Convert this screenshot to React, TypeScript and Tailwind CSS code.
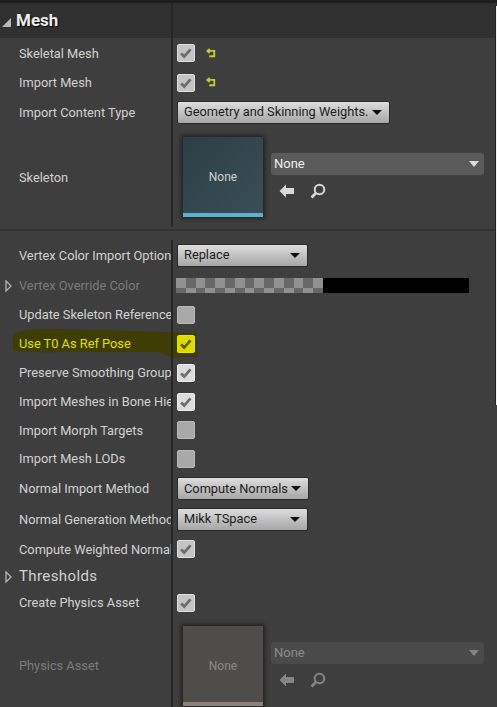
import type { ReactNode } from "react";

const FONT = "font-['Roboto','Liberation_Sans',sans-serif]";

const Check = ({ dark }: { dark?: boolean }) => (
  <svg viewBox="0 0 18 18" className="h-[18px] w-[18px]">
    <path
      d="M3.5 9.5 7 13 14 5"
      fill="none"
      stroke={dark ? "#5c5c00" : "#6b6b6b"}
      strokeWidth="3"
    />
  </svg>
);

const Checkbox = ({
  checked,
  variant = "normal",
}: {
  checked?: boolean;
  variant?: "normal" | "bright" | "yellow";
}) => {
  const look =
    variant === "yellow"
      ? "bg-[#dcdc00] border-[#e6e600]"
      : variant === "bright"
        ? "bg-[#dcdcdc] border-[#efefef]"
        : checked
          ? "bg-[#c4c4c4] border-[#e0e0e0]"
          : "bg-[#a9a9a9] border-[#b8b8b8]";
  return (
    <div
      className={`flex h-[18px] w-[18px] shrink-0 items-center justify-center rounded-[2px] border ${look}`}
    >
      {checked && <Check dark={variant === "yellow"} />}
    </div>
  );
};

const ResetArrow = () => (
  <svg viewBox="0 0 12 12" className="ml-[11px] h-[11px] w-[11px]">
    <path
      d="M4 1 1.5 3.2 4 5.4M2 3.2h7v5.8H3.5"
      fill="none"
      stroke="#c6ca2f"
      strokeWidth="2"
    />
  </svg>
);

const Dropdown = ({ label, width }: { label: string; width: string }) => (
  <div
    className={`flex h-[23px] items-center justify-between rounded-[2px] border border-[#2a2a2a] bg-gradient-to-b from-[#dedede] to-[#a6a6a6] pl-[6px] pr-[7px] text-[12.8px] text-[#1c1c1c] ${width}`}
  >
    <span className="whitespace-nowrap">{label}</span>
    <span className="h-0 w-0 shrink-0 border-x-[5px] border-t-[5px] border-x-transparent border-t-[#111]" />
  </div>
);

const BackArrow = ({ color }: { color: string }) => (
  <svg viewBox="0 0 16 14" className="h-[14px] w-4">
    <path d="M7 0.5 0.5 7 7 13.5V10h8V4H7z" fill={color} />
  </svg>
);

const Search = ({ color }: { color: string }) => (
  <svg viewBox="0 0 16 16" className="h-4 w-4">
    <circle cx="9.5" cy="6.5" r="4.8" fill="none" stroke={color} strokeWidth="2" />
    <path d="M6 10 1.5 14.5" stroke={color} strokeWidth="2.6" />
  </svg>
);

const Expander = () => (
  <svg viewBox="0 0 7 12" className="absolute left-[5px] h-3 w-[7px]">
    <path d="M1 1 6 6 1 11Z" fill="#3a3a3a" stroke="#b5b5b5" strokeWidth="1.3" />
  </svg>
);

const Row = ({
  label,
  height,
  muted,
  yellow,
  big,
  expander,
  children,
}: {
  label: string;
  height: string;
  muted?: boolean;
  yellow?: boolean;
  big?: boolean;
  expander?: boolean;
  children?: ReactNode;
}) => {
  const color = yellow
    ? "text-[#e0e000]"
    : muted
      ? "text-[#7c7c7c]"
      : "text-[#d2d2d2]";
  return (
    <div className={`relative z-10 flex ${height}`}>
      <div className="relative flex w-[171px] shrink-0 items-center overflow-hidden pl-[19px] pt-[1px]">
        {expander && <Expander />}
        <span
          className={`whitespace-nowrap ${big ? "text-[15px] tracking-[0.4px]" : "text-[12.8px]"} ${color}`}
        >
          {label}
        </span>
      </div>
      <div className="w-[2px] shrink-0 bg-[#262626]" />
      <div className="flex min-w-0 flex-1 items-center pl-[4px]">{children}</div>
    </div>
  );
};

const AssetPicker = ({ disabled }: { disabled?: boolean }) => {
  const icon = disabled ? "#858585" : "#d8d8d8";
  return (
    <div className="flex items-center pl-[6px]">
      <div
        className={`flex h-[80px] w-[80px] flex-col shadow-[0_0_4px_2px_rgba(0,0,0,0.45)] ${disabled ? "bg-[#4f4d4c]" : "bg-gradient-to-br from-[#2c3f47] to-[#3b4f58]"}`}
      >
        <div
          className={`flex flex-1 items-center justify-center pt-[4px] text-[12px] ${disabled ? "text-[#8a8a8a]" : "text-[#cfcfcf]"}`}
        >
          None
        </div>
        <div className={`h-[4px] ${disabled ? "bg-[#8c8079]" : "bg-[#5fb0cd]"}`} />
      </div>
      <div className="ml-[8px] flex w-[213px] flex-col pb-[2px]">
        <div
          className={`flex h-[22px] items-center justify-between rounded-[3px] pl-[3px] pr-[5px] text-[13px] ${disabled ? "bg-[#4a4a4a] text-[#8c8c8c]" : "bg-[#5a5a5a] text-[#eeeeee]"}`}
        >
          None
          <span
            className={`h-0 w-0 border-x-[5px] border-t-[6px] border-x-transparent ${disabled ? "border-t-[#858585]" : "border-t-[#dddddd]"}`}
          />
        </div>
        <div className="ml-[8px] mt-[8px] flex items-center gap-[15px]">
          <BackArrow color={icon} />
          <Search color={icon} />
        </div>
      </div>
    </div>
  );
};

const ColorBar = () => {
  const cells = Array.from({ length: 30 }, (_, i) => i);
  return (
    <div className="-ml-[1px] flex h-[15px] w-[293px]">
      <div className="grid w-[147px] grid-cols-[repeat(15,1fr)] grid-rows-[10px_5px]">
        {cells.map((i) => (
          <div
            key={i}
            className={i % 2 === 0 ? "bg-[#919191]" : "bg-[#686868]"}
          />
        ))}
      </div>
      <div className="flex-1 bg-black" />
    </div>
  );
};

export default function App() {
  return (
    <div
      className={`relative isolate h-[707px] w-[497px] overflow-hidden bg-[#3e3e3e] ${FONT}`}
    >
      <div className="h-[3px] bg-[#1e1e1e]" />
      <div className="flex h-[35px] bg-[#303030]">
        <div className="flex w-[171px] items-center pl-[2px]">
          <span className="mt-[3px] h-0 w-0 border-b-[9px] border-l-[9px] border-b-[#b8b8b8] border-l-transparent" />
          <span className="ml-[5px] text-[17px] font-bold text-[#eeeeee] [text-shadow:1px_1px_1px_#000]">
            Mesh
          </span>
        </div>
        <div className="w-[2px] bg-[#262626]" />
      </div>

      <Row label="Skeletal Mesh" height="h-[30px]">
        <Checkbox checked />
        <ResetArrow />
      </Row>
      <Row label="Import Mesh" height="h-[29px]">
        <Checkbox checked />
        <ResetArrow />
      </Row>
      <Row label="Import Content Type" height="h-[30px]">
        <Dropdown label="Geometry and Skinning Weights." width="w-[213px]" />
      </Row>
      <Row label="Skeleton" height="h-[100px]">
        <AssetPicker />
      </Row>

      <div className="mt-[2px] h-[2px] bg-[#333333]" />
      <div className="h-[9px]" />

      <Row label="Vertex Color Import Option" height="h-[30px]">
        <Dropdown label="Replace" width="w-[131px]" />
      </Row>
      <Row label="Vertex Override Color" height="h-[30px]" muted expander>
        <ColorBar />
      </Row>
      <Row label="Update Skeleton Reference" height="h-[29px]">
        <Checkbox />
      </Row>
      <Row label="Use T0 As Ref Pose" height="h-[29px]" yellow>
        <Checkbox checked variant="yellow" />
      </Row>
      <Row label="Preserve Smoothing Group" height="h-[29px]">
        <Checkbox checked variant="bright" />
      </Row>
      <Row label="Import Meshes in Bone Hie" height="h-[29px]">
        <Checkbox checked variant="bright" />
      </Row>
      <Row label="Import Morph Targets" height="h-[28px]">
        <Checkbox />
      </Row>
      <Row label="Import Mesh LODs" height="h-[29px]">
        <Checkbox />
      </Row>
      <Row label="Normal Import Method" height="h-[31px]">
        <Dropdown label="Compute Normals" width="w-[132px]" />
      </Row>
      <Row label="Normal Generation Method" height="h-[30px]">
        <Dropdown label="Mikk TSpace" width="w-[131px]" />
      </Row>
      <Row label="Compute Weighted Normal" height="h-[30px]">
        <Checkbox checked />
      </Row>
      <Row label="Thresholds" height="h-[24px]" big expander />
      <Row label="Create Physics Asset" height="h-[29px]">
        <Checkbox checked />
      </Row>
      <Row label="Physics Asset" height="h-[96px]" muted>
        <div className="mt-[2px]">
          <AssetPicker disabled />
        </div>
      </Row>

      {/* marker scribble behind the T0 row */}
      <svg
        viewBox="0 0 200 34"
        className="pointer-events-none absolute left-0 top-[326px] z-0 h-[34px] w-[200px]"
      >
        <path
          d="M13 8Q25 2 60 3L130 5 197 7 198 30 172 32 160 26 60 26Q25 27 13 24Z"
          fill="#3d3d05"
        />
      </svg>

      {/* window edge showing behind the panel */}
      <div className="absolute left-[495px] top-[6px] h-[399px] w-[2px] border-l border-[#222] bg-[#f2f2f2]" />
    </div>
  );
}
